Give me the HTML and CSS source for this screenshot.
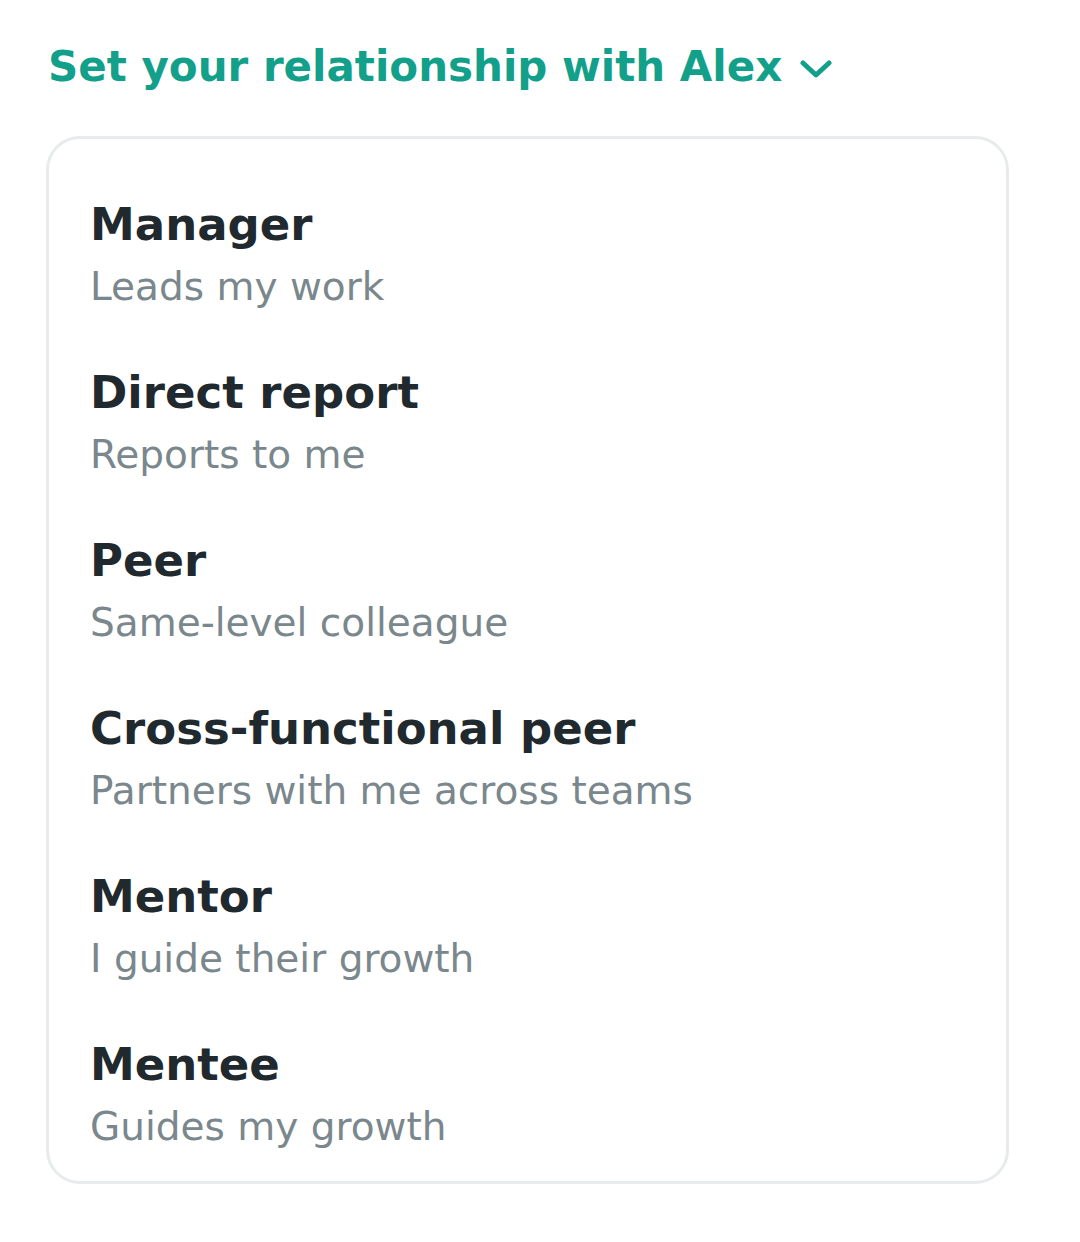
FILE: index.html
```html
<!DOCTYPE html>
<html>
<head>
  <link rel="stylesheet" href="styles.css">
</head>
<body>
  <h2 class="picker-title">
    Set your relationship with Alex
    <svg class="chevron" width="32" height="20" viewBox="0 0 32 20">
      <path d="M3 4 L16 16 L29 4" fill="none" stroke="currentColor" stroke-width="5" stroke-linecap="round" stroke-linejoin="round" />
    </svg>
  </h2>
  <div class="options">
    <div class="option">
      <div class="option-name">Manager</div>
      <div class="option-desc">Leads my work</div>
    </div>
    <div class="option">
      <div class="option-name">Direct report</div>
      <div class="option-desc">Reports to me</div>
    </div>
    <div class="option">
      <div class="option-name">Peer</div>
      <div class="option-desc">Same-level colleague</div>
    </div>
    <div class="option">
      <div class="option-name">Cross-functional peer</div>
      <div class="option-desc">Partners with me across teams</div>
    </div>
    <div class="option">
      <div class="option-name">Mentor</div>
      <div class="option-desc">I guide their growth</div>
    </div>
    <div class="option">
      <div class="option-name">Mentee</div>
      <div class="option-desc">Guides my growth</div>
    </div>
  </div>
</body>
</html>
```

FILE: styles.css
```css
body {
  margin: 0;
  padding: 39px 71px 0 46px;
  font-family: "DejaVu Sans", sans-serif;
  background: #fff;
}
.picker-title {
  display: flex;
  align-items: center;
  gap: 18px;
  margin: 0 0 41px 2px;
  font-size: 42px;
  line-height: 56px;
  font-weight: bold;
  color: #12a08a;
}
.chevron {
  margin-top: 4px;
}
.options {
  display: flex;
  flex-direction: column;
  gap: 44px;
  border: 3px solid #e8ebec;
  border-radius: 34px;
  padding: 56px 41px 22px;
}
.option-name {
  font-size: 45px;
  line-height: 60px;
  font-weight: bold;
  color: #1f292e;
}
.option-desc {
  font-size: 39px;
  line-height: 64px;
  color: #7a878c;
}
```
